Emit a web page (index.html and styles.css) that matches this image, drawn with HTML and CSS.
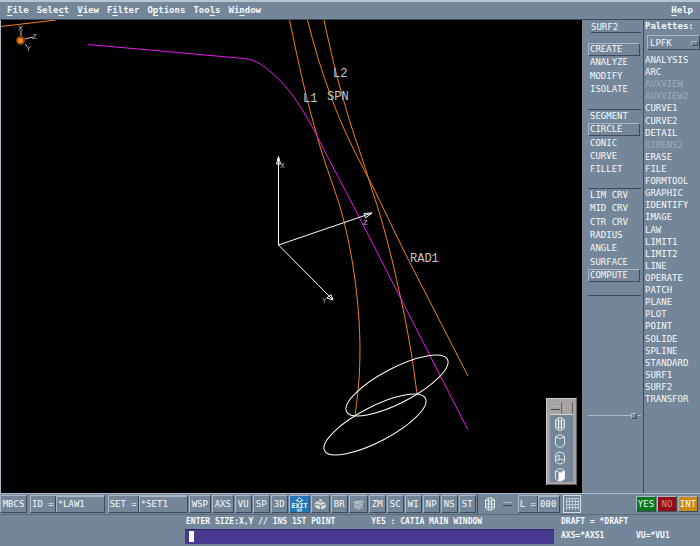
FILE: index.html
```html
<!DOCTYPE html>
<html lang="en">
<head>
<meta charset="utf-8">
<title>CATIA</title>
<link rel="stylesheet" href="styles.css">
</head>
<body>
<nav class="menubar">
  <button type="button"><u>F</u>ile</button>
  <button type="button">Sele<u>c</u>t</button>
  <button type="button"><u>V</u>iew</button>
  <button type="button">F<u>i</u>lter</button>
  <button type="button">O<u>p</u>tions</button>
  <button type="button">Too<u>l</u>s</button>
  <button type="button">Wi<u>n</u>dow</button>
  <button type="button" class="help"><u>H</u>elp</button>
</nav>

<div class="workspace">
  <main class="viewport">
    <svg class="scene" viewBox="1 20 581 473" preserveAspectRatio="xMinYMin meet">
      <g class="orange">
        <path d="M1 26.5 L56 20"/>
        <path d="M289.500 20 C294 41 298 61 303 82 C307 101 313 121 319 143 C326 167 335 190 341 210 C350 243 356 277 359 320 C361 352 360 382 355 415"/>
        <path d="M307.500 20 C314 46 322 73 331.700 98 C341 125 355 153 371 183 C382 205 394 231 407 257 L468 376"/>
        <path d="M324 20 C330 48 336 75 345 105 C352 131 363 159 372 190 C382 219 391 253 400 295 C408 330 413 362 417 394"/>
      </g>
      <path class="magenta" d="M88 44.500 L244 58.500 C257 60 264 66 272 73 C290 88 305 112 319 140 C331 164 343 186 355 209 L468 430"/>
      <g class="white">
        <ellipse cx="397" cy="385.500" rx="56.800" ry="17.500" transform="rotate(-27.5 397 385.5)"/>
        <ellipse cx="375" cy="424.500" rx="56.800" ry="17.500" transform="rotate(-27.5 375 424.5)"/>
        <path d="M278.500 157 V245 L372 213 M278.500 245 L333 300"/>
        <path d="M278.500 156.500 L276.500 164 H280.500 Z M372 213 L364 213.500 L365.500 218 Z M333 300 L327 298 L331 294.500 Z"/>
      </g>
      <g class="gizmo">
        <path d="M21 36 V31 M25 39 L33 37 M25 44 L27 46"/>
        <circle class="ring" cx="20.500" cy="40.500" r="4"/>
        <circle class="dot" cx="20.500" cy="40.500" r="3"/>
      </g>
      <g class="axis">
        <text x="18" y="31">X</text><text x="32" y="39">Z</text><text x="26" y="51">Y</text>
        <text x="280" y="168">X</text><text x="363" y="225">Z</text><text x="322" y="303">Y</text>
      </g>
      <g class="tag">
        <text x="303" y="102">L1</text>
        <text x="327" y="100">SPN</text>
        <text x="333" y="77">L2</text>
        <text x="410" y="262">RAD1</text>
      </g>
    </svg>
    <aside class="float">
      <div class="float-bar"><button type="button" class="dash" aria-label="Window menu"></button><span></span></div>
      <div class="float-body">
        <button type="button" aria-label="Wireframe"><svg class="cyl" viewBox="0 0 10 14"><path d="M.5 3 Q5 -1.500 9.500 3 V11 Q5 15.500 .5 11Z M.5 3 Q5 6 9.500 3 M.5 7 H9.500 M.5 10 H9.500 M3.500 1 V13 M6.500 1 V13"/></svg></button>
        <button type="button" aria-label="Outline"><svg class="cyl" viewBox="0 0 10 14"><path d="M.5 3 Q5 -1.500 9.500 3 V11 Q5 15.500 .5 11Z M.5 3 Q5 6 9.500 3"/></svg></button>
        <button type="button" aria-label="Hidden lines"><svg class="cyl" viewBox="0 0 10 14"><path d="M.5 4 Q2 0 5 1 Q9 1 9.500 5 V11 Q5 15 .5 11Z M.5 6 L4 4 V8 L9.500 9 M0 9 H5"/></svg></button>
        <button type="button" aria-label="Shaded"><svg class="cyl" viewBox="0 0 10 14"><path d="M.5 3 Q5 -1.500 9.500 3 V11 Q5 15.500 .5 11Z M.5 3 Q5 6 9.500 3"/><path class="solid" d="M3.500 5 Q7 5 9.500 3 V11 Q7 13.500 3.500 13Z"/></svg></button>
      </div>
    </aside>
  </main>

  <section class="functions">
    <h2>SURF2</h2>
    <ul class="four">
      <li><button type="button" class="on">CREATE</button></li>
      <li><button type="button">ANALYZE</button></li>
      <li><button type="button">MODIFY</button></li>
      <li><button type="button">ISOLATE</button></li>
    </ul>
    <ul class="five">
      <li><button type="button">SEGMENT</button></li>
      <li><button type="button" class="on">CIRCLE</button></li>
      <li><button type="button">CONIC</button></li>
      <li><button type="button">CURVE</button></li>
      <li><button type="button">FILLET</button></li>
    </ul>
    <ul class="seven">
      <li><button type="button">LIM CRV</button></li>
      <li><button type="button">MID CRV</button></li>
      <li><button type="button">CTR CRV</button></li>
      <li><button type="button">RADIUS</button></li>
      <li><button type="button">ANGLE</button></li>
      <li><button type="button">SURFACE</button></li>
      <li><button type="button" class="on">COMPUTE</button></li>
    </ul>
    <div class="sash"><span></span></div>
  </section>

  <section class="palettes">
    <label for="palette">Palettes:</label>
    <div class="picker">
      <select id="palette"><option>LPFK</option></select>
    </div>
    <ul>
      <li><button type="button">ANALYSIS</button></li>
      <li><button type="button">ARC</button></li>
      <li><button type="button" disabled>AUXVIEW</button></li>
      <li><button type="button" disabled>AUXVIEW2</button></li>
      <li><button type="button">CURVE1</button></li>
      <li><button type="button">CURVE2</button></li>
      <li><button type="button">DETAIL</button></li>
      <li><button type="button" disabled>DIMENS2</button></li>
      <li><button type="button">ERASE</button></li>
      <li><button type="button">FILE</button></li>
      <li><button type="button">FORMTOOL</button></li>
      <li><button type="button">GRAPHIC</button></li>
      <li><button type="button">IDENTIFY</button></li>
      <li><button type="button">IMAGE</button></li>
      <li><button type="button">LAW</button></li>
      <li><button type="button">LIMIT1</button></li>
      <li><button type="button">LIMIT2</button></li>
      <li><button type="button">LINE</button></li>
      <li><button type="button">OPERATE</button></li>
      <li><button type="button">PATCH</button></li>
      <li><button type="button">PLANE</button></li>
      <li><button type="button">PLOT</button></li>
      <li><button type="button">POINT</button></li>
      <li><button type="button">SOLIDE</button></li>
      <li><button type="button">SPLINE</button></li>
      <li><button type="button">STANDARD</button></li>
      <li><button type="button">SURF1</button></li>
      <li><button type="button">SURF2</button></li>
      <li><button type="button">TRANSFOR</button></li>
    </ul>
  </section>
</div>

<div class="toolbar">
  <button type="button" class="key w4">MBCS</button>
  <div class="field"><label for="law">ID =</label><input id="law" value="*LAW1"></div>
  <div class="field"><label for="set">SET =</label><input id="set" value="*SET1"></div>
  <div class="keys">
    <button type="button" class="key w3">WSP</button>
    <button type="button" class="key w3">AXS</button>
    <button type="button" class="key">VU</button>
    <button type="button" class="key">SP</button>
    <button type="button" class="key">3D</button>
    <button type="button" class="key exit" aria-label="Exit"><svg viewBox="0 0 20 16"><path d="M10 1 L13.500 4.500 H11.500 V5.500 H8.500 V4.500 H6.500Z M8 13.500 H12 V15.500 H8Z"/><text x="10" y="12" text-anchor="middle">EXIT</text></svg></button>
    <button type="button" class="key pic" aria-label="Solid"><svg viewBox="0 0 18 16"><path class="lite" d="M2 8 L4 5 L7 4 L8 2 L11 3 L12 5 L15 7 L15.500 11 L12 14 L7 14 L3 12Z"/><path d="M3 9 Q6 7 9 10 L14 8 M9 10 V13 M7 5 Q9 7 12 5"/></svg></button>
    <button type="button" class="key">BR</button>
    <button type="button" class="key pic" aria-label="Box"><svg viewBox="0 0 18 16"><path class="mid" d="M3 6 L7 3 L14 4 L15 6 L14 11 L9 14 L4 11Z"/><path class="edge" d="M3 6 L9 8 L15 5 M5 5 Q8 7 13 4 M4 9 L9 11 L14 8 M4 11 L9 13.500 L14 11"/></svg></button>
    <button type="button" class="key">ZM</button>
    <button type="button" class="key">SC</button>
    <button type="button" class="key">WI</button>
    <button type="button" class="key">NP</button>
    <button type="button" class="key">NS</button>
    <button type="button" class="key">ST</button>
  </div>
  <div class="display">
    <svg class="cyl" viewBox="0 0 10 14"><path d="M.5 3 Q5 -1.500 9.500 3 V11 Q5 15.500 .5 11Z M.5 3 Q5 6 9.500 3 M.5 7 H9.500 M.5 10 H9.500 M3.500 1 V13 M6.500 1 V13"/></svg>
    <button type="button" class="dash" aria-label="Display mode"></button>
  </div>
  <div class="field layer"><label for="layer">L =</label><input id="layer" value="000"></div>
  <button type="button" class="key grid" aria-label="Grid"><svg viewBox="0 0 13 12"><path d="M0 .5 H13 M0 3.500 H13 M0 6.500 H13 M0 9.500 H13 M.5 0 V12 M3.500 0 V12 M6.500 0 V12 M9.500 0 V12 M12.500 0 V12"/></svg></button>
  <div class="answers">
    <button type="button" class="key yes">YES</button>
    <button type="button" class="key no">NO</button>
    <button type="button" class="key int">INT</button>
  </div>
</div>

<footer class="status">
  <div class="prompt">
    <label for="command"><span>ENTER SIZE:X,Y // INS 1ST POINT</span><span>YES : CATIA MAIN WINDOW</span></label>
    <input id="command">
  </div>
  <div class="state">
    <span class="wide">DRAFT = *DRAFT</span>
    <span>AXS=*AXS1</span><span>VU=*VU1</span>
  </div>
</footer>
</body>
</html>
```
FILE: styles.css
```css
:root {
  --face: #74879a;
  --light: #a9b8c4;
  --dark: #3e4a58;
  --ink: #f4f8fa;
}

* { box-sizing: border-box; }

body {
  margin: 0;
  min-height: 100vh;
  display: flex;
  flex-direction: column;
  background: var(--face);
  color: var(--ink);
  font: 9px/12px "DejaVu Sans Mono", "Liberation Mono", monospace;
}

button, input, select {
  font: inherit;
  color: inherit;
  background: none;
  border: 0;
  border-radius: 0;
  margin: 0;
  padding: 0;
}

button { text-align: left; white-space: nowrap; }
ul { list-style: none; margin: 0; padding: 0; }
svg { display: block; fill: none; }

/* Menu bar */
.menubar {
  display: flex;
  align-items: center;
  gap: 8px;
  height: 20px;
  padding: 0 7px 2px;
  border-top: 2px solid #b4c6d0;
  border-bottom: 1px solid var(--dark);
  font-weight: bold;
}
.menubar u { text-underline-offset: 2px; }
.help { margin-left: auto; }

/* Drawing area and side panels */
.workspace { display: flex; flex: 1; }

.viewport {
  position: relative;
  flex: 1;
  background: #000;
  border-left: 1px solid var(--light);
}
.scene { width: 100%; }
.orange { stroke: #f08020; }
.magenta { stroke: #e818e8; }
.white { stroke: #fff; }
.gizmo { stroke: #c8c8c8; }
.ring { stroke: #b85a10; }
.dot { fill: #f08020; stroke: none; }
.axis { fill: #b4b4b4; font: 8px "Liberation Mono", monospace; }
.tag { fill: #c8c8c8; font: 12px "Liberation Mono", monospace; }

.float {
  position: absolute;
  right: 5px;
  bottom: 8px;
  width: 31px;
  padding: 3px 3px 2px;
  background: #a8a3a3;
  border: 1px solid;
  border-color: #d0cccc #686464 #686464 #d0cccc;
}
.float-bar {
  display: flex;
  height: 13px;
  border-bottom: 1px solid #d8d4d4;
}
.float-bar > * { flex: 1; border-right: 1px solid #686464; }
.float-body {
  display: flex;
  flex-direction: column;
  gap: 3px;
  padding: 2px 5px 0;
  background: var(--face);
}
.dash { display: flex; align-items: center; justify-content: center; }
.dash::before {
  content: "";
  width: 9px;
  height: 2px;
  border-top: 1px solid var(--light);
  border-bottom: 1px solid var(--dark);
}
.cyl { width: 10px; height: 14px; stroke: #dce8e4; }
.solid { fill: #fff; stroke: none; }

.functions {
  width: 62px;
  padding: 0 2px 0 5px;
  border-left: 1px solid #8c8484;
  border-right: 1px solid var(--dark);
}
.functions h2 {
  margin: 0 0 10px 3px;
  height: 13px;
  font: inherit;
  line-height: 14px;
  border-bottom: 1px solid var(--dark);
}
.functions ul { display: flex; flex-direction: column; border-bottom: 1px solid var(--dark); }
.functions li { flex: 1; display: flex; }
.functions li button { width: 52px; padding-left: 2px; line-height: 11px; }
.functions .on {
  padding-left: 1px;
  border: 1px solid;
  border-color: var(--light) var(--dark) var(--dark) var(--light);
  line-height: 9px;
}
.four { height: 67px; padding-bottom: 13px; }
.five { height: 79px; padding-bottom: 12px; }
.seven { height: 107px; padding-bottom: 13px; }
.sash {
  display: flex;
  align-items: center;
  justify-content: flex-end;
  height: 7px;
  margin-top: 116px;
  background: linear-gradient(var(--light), var(--light)) center / 100% 1px no-repeat;
}
.sash span {
  width: 6px;
  height: 6px;
  margin-right: 4px;
  background: var(--face);
  border: 1px solid;
  border-color: var(--light) var(--dark) var(--dark) var(--light);
}

.palettes {
  display: flex;
  flex-direction: column;
  width: 56px;
  padding-left: 1px;
}
.palettes label { font-weight: bold; line-height: 13px; }
.picker { position: relative; margin: 2px 0 4px 2px; }
.picker::after {
  content: "";
  position: absolute;
  right: 2px;
  top: 6px;
  width: 5px;
  height: 3px;
  border: 1px solid;
  border-color: var(--light) var(--dark) var(--dark) var(--light);
}
.picker select {
  display: block;
  width: 100%;
  height: 15px;
  padding-left: 2px;
  appearance: none;
  border: 1px solid;
  border-color: var(--light) var(--dark) var(--dark) var(--light);
}
.palettes ul {
  flex: 1;
  display: flex;
  flex-direction: column;
  padding-bottom: 88px;
}
.palettes li { flex: 1; display: flex; }
.palettes :disabled { color: #9cadba; }

/* Toolbar */
.toolbar {
  display: flex;
  align-items: center;
  height: 22px;
  padding-right: 2px;
  border-top: 1px solid var(--light);
  border-bottom: 1px solid #596979;
}
.key {
  width: 17px;
  height: 18px;
  text-align: center;
  border: 1px solid;
  border-color: var(--light) var(--dark) var(--dark) var(--light);
}
.w3 { width: 22px; }
.w4 { width: 27px; }
.keys { display: flex; gap: 1px; margin-left: 1px; }
.field {
  display: flex;
  align-items: center;
  height: 18px;
  margin-left: 3px;
  border: 1px solid;
  border-color: var(--light) var(--dark) var(--dark) var(--light);
}
.field label { padding: 0 1px; white-space: nowrap; }
.field input {
  width: 49px;
  height: 16px;
  padding-left: 2px;
  border-left: 1px solid var(--dark);
  box-shadow: inset 1px 1px var(--light);
}
.field.layer { margin-left: 3px; }
.field.layer input { width: 22px; }
.exit { width: 21px; background: #2878b8; }
.exit svg { width: 19px; height: 16px; stroke: #d8ecf8; }
.exit text { fill: #fff; stroke: none; font: bold 7px "DejaVu Sans Mono", monospace; }
.pic { width: 19px; }
.pic svg { width: 17px; height: 16px; stroke: #66747f; }
.lite { fill: #d4dcdc; }
.mid { fill: #8e9ca8; }
.pic .edge { stroke: #c4ced6; }
.display {
  display: flex;
  align-items: center;
  gap: 8px;
  height: 20px;
  margin-left: 1px;
  padding: 0 3px 0 7px;
  border-left: 1px solid var(--dark);
}
.grid { margin-left: 3px; width: 18px; border-color: #d4dee6; }
.grid svg { width: 13px; height: 12px; margin: 0 auto; stroke: #c0ccd6; }
.answers { display: flex; gap: 1px; margin-left: auto; }
.answers .key { width: 20px; height: 16px; }
.answers .yes { background: #087818; }
.answers .no { background: #960c14; color: #d88888; }
.answers .int { background: #cc8a10; }

/* Status area */
.status {
  display: flex;
  gap: 7px;
  height: 31px;
  padding-left: 185px;
  font-size: 8px;
  font-weight: bold;
}
.prompt { flex: 1; }
.prompt label { display: flex; gap: 36px; padding: 0 1px 1px; line-height: 13px; }
.prompt input {
  display: block;
  width: 100%;
  height: 15px;
  border-top: 1px solid #2c2468;
  background: linear-gradient(#fff, #fff) 4px 1px / 5px 11px no-repeat, #483a8e;
}
.state {
  display: grid;
  grid-template-columns: 75px 1fr;
  align-content: start;
  width: 139px;
  line-height: 14px;
}
.wide { grid-column: 1 / -1; }
```
